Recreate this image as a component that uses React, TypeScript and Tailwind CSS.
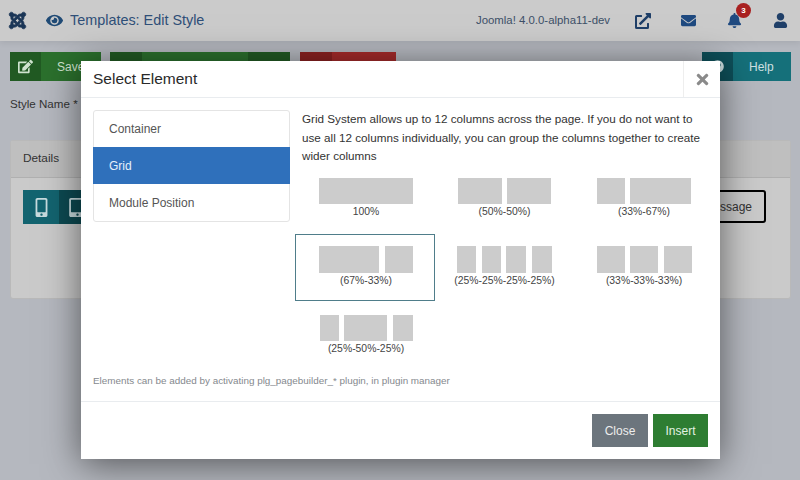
import { FaBell, FaEdit, FaEnvelope, FaExternalLinkAlt, FaEye, FaJoomla, FaMobileAlt, FaQuestionCircle, FaTabletAlt, FaTimes, FaUser } from 'react-icons/fa'

const grids = [
  { label: '100%', bars: ['w-[94px]'] },
  { label: '(50%-50%)', bars: ['w-[44px]', 'w-[44px]'] },
  { label: '(33%-67%)', bars: ['w-[28px]', 'w-[61px]'] },
  { label: '(67%-33%)', bars: ['w-[60px]', 'w-[28px]'], selected: true },
  { label: '(25%-25%-25%-25%)', bars: ['w-[19px]', 'w-[19px]', 'w-[20px]', 'w-[20px]'] },
  { label: '(33%-33%-33%)', bars: ['w-[28px]', 'w-[28px]', 'w-[28px]'] },
  { label: '(25%-50%-25%)', bars: ['w-[19px]', 'w-[43px]', 'w-[20px]'] },
]

const Background = () => {
  return (
    <div className="flex flex-col h-full">
      <div className="relative h-[41px] shrink-0 bg-[#cbcbcb] flex items-center pl-[8px] pr-[12px] shadow-[0_2px_6px_rgba(0,0,0,0.08)]">
        <FaJoomla className="text-[19px] text-[#1a3556]" stroke="currentColor" strokeWidth={18} />
        <FaEye className="ml-[19px] text-[17px] text-[#1f4a75]" />
        <span className="ml-[7px] text-[14.4px] text-[#2f4f78]">Templates: Edit Style</span>
        <span className="ml-auto text-[11.4px] text-[#3d5068]">Joomla! 4.0.0-alpha11-dev</span>
        <FaExternalLinkAlt className="ml-[25px] text-[16px] text-[#1f3f68]" />
        <FaEnvelope className="ml-[30px] text-[15px] text-[#1f4a80]" />
        <div className="relative ml-[31px]">
          <FaBell className="text-[15px] text-[#1f4a80]" />
          <span className="absolute -top-[10px] left-[9px] w-[15px] h-[15px] rounded-full bg-[#a82020] text-white text-[8px] font-bold flex items-center justify-center">3</span>
        </div>
        <FaUser className="ml-[31px] text-[15px] text-[#1f3f68]" />
      </div>
      <div className="flex-1 bg-[#b5b8bf] pl-[10px] pr-[9px] pt-[11px]">
        <div className="flex h-[29px]">
          <div className="flex w-[91px] bg-[#2b702d] text-[#cfe3cf] text-[12px]">
            <div className="w-[31px] bg-[#215a23] flex items-center justify-center"><FaEdit className="text-[15px]" /></div>
            <span className="ml-[16px] self-center">Save</span>
          </div>
          <div className="flex justify-between w-[180px] ml-[9px] bg-[#2b702d]">
            <div className="w-[32px] bg-[#215a23]" />
            <div className="w-[42px] bg-[#215a23]" />
          </div>
          <div className="flex w-[96px] ml-[10px] bg-[#a52a2a]">
            <div className="w-[32px] bg-[#8b2020]" />
          </div>
          <div className="flex w-[89px] ml-auto bg-[#15707a] text-[#cfe0e2] text-[12px]">
            <div className="w-[31px] bg-[#0e4f59] flex items-center justify-center"><FaQuestionCircle className="text-[13px]" /></div>
            <span className="ml-[16px] self-center">Help</span>
          </div>
        </div>
        <div className="mt-[16px] h-[14px] flex items-center text-[11.6px] text-[#333]">Style Name *</div>
        <div className="mt-[29px] h-[159px] rounded-[3px] border border-[#b9b9b9] bg-[#cacaca]">
          <div className="h-[37px] bg-[#bfbfbf] border-b border-[#b0b0b0] flex items-center pl-[12px] text-[11.8px] text-[#333]">Details</div>
          <div className="flex justify-between pl-[12px] pt-[12px] pr-[24px]">
            <div className="flex h-[34px]">
              <div className="w-[36px] bg-[#136470] flex items-center justify-center text-[#c7dbde]"><FaMobileAlt className="text-[19px]" /></div>
              <div className="w-[36px] bg-[#0d4a52] flex items-center justify-center text-[#c7dbde]"><FaTabletAlt className="text-[19px]" /></div>
            </div>
            <div className="h-[33px] px-[12px] rounded-[3px] border-2 border-black flex items-center text-[12px] text-[#333]">Message</div>
          </div>
        </div>
      </div>
    </div>
  )
}

const App = () => {
  return (
    <div className="relative w-[800px] h-[480px] overflow-hidden font-['Liberation_Sans',sans-serif]">
      <Background />
      <div className="absolute left-[81px] top-[61px] w-[639px] h-[398px] bg-white flex flex-col shadow-[0_5px_35px_rgba(0,0,0,0.55)]">
        <div className="h-[37px] shrink-0 flex items-center border-b border-[#e9ecef]">
          <h5 className="ml-[12px] text-[15.5px] text-[#2a2a2a]">Select Element</h5>
          <div className="ml-auto w-[37px] h-full border-l border-[#eeeeee] flex items-center justify-center text-[#8a8a8a]">
            <FaTimes className="text-[17px]" />
          </div>
        </div>
        <div className="flex-1 flex px-[12px] pt-[12px]">
          <div className="w-[197px] shrink-0">
            <div className="rounded-[3px] border border-[#e4e4e4] text-[12px] text-[#555]">
              <div className="h-[36px] flex items-center pl-[15px]">Container</div>
              <div className="h-[37px] flex items-center pl-[16px] -mx-px bg-[#2f70bb] text-[#e6f0fa]">Grid</div>
              <div className="h-[37px] flex items-center pl-[15px]">Module Position</div>
            </div>
          </div>
          <div className="flex-1 ml-[5px]">
            <p className="pl-[7px] text-[11.7px] leading-[18.5px] text-[#333] w-[412px]">
              Grid System allows up to 12 columns across the page. If you do not want to use all 12 columns individually, you can group the columns together to create wider columns
            </p>
            <div className="grid grid-cols-[140px_139px_140px]">
              {grids.map((g, idx) => (
                <div
                  key={g.label}
                  className={`flex flex-col items-center ${idx % 3 === 0 ? 'pl-[2px]' : ''} ${g.selected ? 'h-[67px] pt-[11px] border border-[#4f7d8a]' : 'h-[68.5px] pt-[12px]'}`}
                >
                  <div className="flex gap-[5.5px]">
                    {g.bars.map((b, i) => (
                      <div key={i} className={`h-[26.5px] bg-[#cccccc] ${b}`} />
                    ))}
                  </div>
                  <span className="mt-[1px] text-[10.4px] leading-[14px] text-[#444]">{g.label}</span>
                </div>
              ))}
            </div>
          </div>
        </div>
        <p className="pl-[12px] pb-[14px] text-[9.9px] leading-[12px] text-[#85898e]">Elements can be added by activating plg_pagebuilder_* plugin, in plugin manager</p>
        <div className="h-[58px] shrink-0 border-t border-[#e9ecef] flex items-center justify-end gap-[5px] pr-[12px] text-[12px]">
          <button className="w-[56px] h-[33px] bg-[#6c757d] text-[#eeeeee]">Close</button>
          <button className="w-[55px] h-[33px] bg-[#2e7d32] text-[#e3f2e3]">Insert</button>
        </div>
      </div>
    </div>
  )
}

export default App
